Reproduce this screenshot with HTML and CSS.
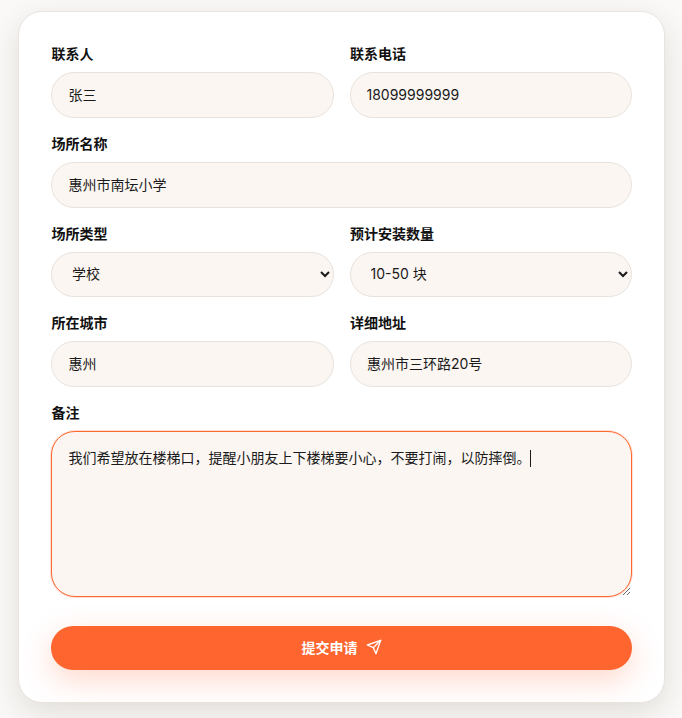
FILE: index.html
```html
<!DOCTYPE html>
<html lang="zh-CN">
<head>
    <meta charset="UTF-8">
    <title>提交申请</title>
    <link rel="stylesheet" href="styles.css">
</head>
<body>
    <form class="card">
        <div class="grid">
            <div class="field">
                <label>联系人</label>
                <input type="text" class="control" value="张三">
            </div>
            <div class="field">
                <label>联系电话</label>
                <input type="text" class="control phone" value="18099999999">
            </div>
            <div class="field wide">
                <label>场所名称</label>
                <input type="text" class="control" value="惠州市南坛小学">
            </div>
            <div class="field">
                <label>场所类型</label>
                <select class="control">
                    <option>学校</option>
                    <option>医院</option>
                    <option>商场</option>
                </select>
            </div>
            <div class="field">
                <label>预计安装数量</label>
                <select class="control">
                    <option>10-50 块</option>
                    <option>50-100 块</option>
                </select>
            </div>
            <div class="field">
                <label>所在城市</label>
                <input type="text" class="control" value="惠州">
            </div>
            <div class="field">
                <label>详细地址</label>
                <input type="text" class="control" value="惠州市三环路20号">
            </div>
            <div class="field wide">
                <label>备注</label>
                <div class="notes">
                    <textarea class="control focused">我们希望放在楼梯口，提醒小朋友上下楼梯要小心，不要打闹，以防摔倒。</textarea>
                    <span class="caret"></span>
                </div>
            </div>
        </div>
        <button type="button" class="submit">
            提交申请
            <svg viewBox="0 0 24 24" width="16" height="16" fill="none" stroke="currentColor" stroke-width="2" stroke-linecap="round" stroke-linejoin="round">
                <polygon points="22 2 15 22 11 13 2 9 22 2"></polygon>
                <line x1="22" y1="2" x2="11" y2="13"></line>
            </svg>
        </button>
    </form>
</body>
</html>
```

FILE: styles.css
```css
* {
    box-sizing: border-box;
}
body {
    margin: 0;
    padding: 11px 17px 15px 18px;
    background: #faf9f7;
    font-family: Inter, 'Noto Sans CJK SC', sans-serif;
    color: #111;
}
.card {
    background: #fff;
    border: 1px solid #e9e4df;
    border-radius: 24px;
    padding: 32px;
    box-shadow: 0 10px 30px rgba(40,30,20,0.12);
}
.grid {
    display: grid;
    grid-template-columns: 1fr 1fr;
    gap: 16px;
}
.wide {
    grid-column: span 2;
}
.field label {
    display: block;
    padding-left: 0.5px;
    font-size: 14px;
    font-weight: 700;
    line-height: 20px;
    margin-bottom: 8px;
}
.control {
    display: block;
    width: 100%;
    height: 45.75px;
    padding: 0 16px 2px 16.5px;
    font: inherit;
    font-size: 14px;
    color: #1a1a1a;
    background-color: #fbf6f2;
    border: 1px solid #e9e2dc;
    border-radius: 24px;
    outline: none;
}
select.control {
    padding-left: 16px;
}
.control.phone {
    padding: 0 16px;
}
textarea.control {
    height: 166px;
    padding: 16px 16px 16px 16.5px;
    line-height: 20px;
    resize: vertical;
}
.control.focused {
    border-color: #ff652f;
    box-shadow: 0 0 0 1px rgba(255,101,47,0.2);
}
.notes {
    position: relative;
}
.caret {
    position: absolute;
    left: 479px;
    top: 19px;
    width: 1px;
    height: 17px;
    background: #1a1a1a;
}
.submit {
    display: flex;
    justify-content: center;
    align-items: center;
    gap: 8px;
    width: 100%;
    height: 44px;
    margin-top: 29px;
    padding: 0 0 2px;
    border: none;
    border-radius: 24px;
    background: #ff652f;
    color: #fff;
    font: inherit;
    font-size: 14px;
    font-weight: 700;
    box-shadow: 0 10px 30px rgba(255,101,47,0.25);
    cursor: pointer;
}
```
